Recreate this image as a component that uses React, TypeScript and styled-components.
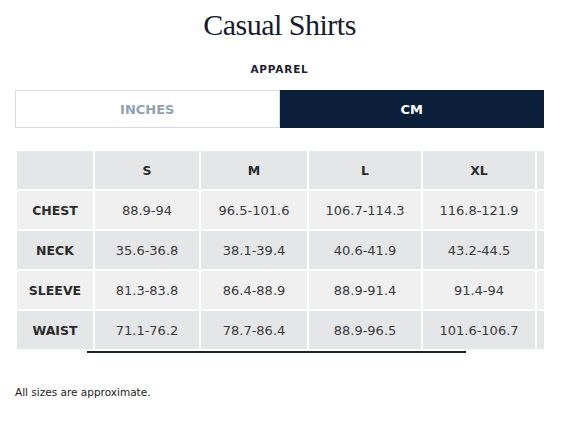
import { FC, Fragment } from 'react';
import styled, { createGlobalStyle } from 'styled-components';

const GlobalStyle = createGlobalStyle`
  html, body {
    margin: 0;
    padding: 0;
    background: #fff;
  }
  body {
    font-family: 'DejaVu Sans', 'Open Sans', sans-serif;
  }
`;

const Page = styled.div`
  width: 529px;
  margin-left: 15px;
  display: flex;
  flex-direction: column;
`;

const Title = styled.h1`
  margin: 7px 0 0;
  font-family: 'Liberation Serif', 'DejaVu Serif', serif;
  font-weight: 400;
  font-size: 30px;
  line-height: 36px;
  letter-spacing: -0.5px;
  text-align: center;
  color: #151b2e;
`;

const Subtitle = styled.div`
  margin-top: 19px;
  font-size: 10.5px;
  line-height: 14px;
  font-weight: 700;
  letter-spacing: 0.8px;
  text-align: center;
  color: #1c2233;
`;

const Toggle = styled.div`
  margin-top: 14px;
  display: grid;
  grid-template-columns: 1fr 1fr;
  height: 38px;
`;

const ToggleOption = styled.div<{ $active?: boolean }>`
  display: flex;
  align-items: center;
  justify-content: center;
  font-size: 13px;
  font-weight: 700;
  box-sizing: border-box;
  border: 1px solid ${(p) => (p.$active ? '#0b1f3a' : '#d7dce2')};
  background: ${(p) => (p.$active ? '#0b1f3a' : '#fff')};
  color: ${(p) => (p.$active ? '#fff' : '#8fa2b7')};
`;

const TableWrap = styled.div`
  margin: 23px 0 0 2px;
  width: 527px;
  overflow: hidden;
`;

const Grid = styled.div`
  display: grid;
  grid-template-columns: 76px 104px 106px 112px 112px 7px;
  grid-auto-rows: 38px;
  gap: 2px;
`;

const Cell = styled.div<{ $light?: boolean; $head?: boolean }>`
  display: flex;
  align-items: center;
  justify-content: center;
  background: ${(p) => (p.$light ? '#f0f0f1' : '#e5e6e8')};
  font-size: ${(p) => (p.$head ? '12.5px' : '13px')};
  font-weight: ${(p) => (p.$head ? 700 : 400)};
  color: ${(p) => (p.$head ? '#2b2b2b' : '#3a3a3a')};
`;

const ScrollThumb = styled.div`
  margin: 2px 0 0 72px;
  width: 379px;
  height: 2px;
  background: #1b2530;
`;

const Note = styled.p`
  margin: 32px 0 0;
  font-size: 10.5px;
  line-height: 14px;
  color: #222;
`;

const sizes = ['S', 'M', 'L', 'XL'];

const rows: Array<{ label: string; values: string[] }> = [
  { label: 'CHEST', values: ['88.9-94', '96.5-101.6', '106.7-114.3', '116.8-121.9'] },
  { label: 'NECK', values: ['35.6-36.8', '38.1-39.4', '40.6-41.9', '43.2-44.5'] },
  { label: 'SLEEVE', values: ['81.3-83.8', '86.4-88.9', '88.9-91.4', '91.4-94'] },
  { label: 'WAIST', values: ['71.1-76.2', '78.7-86.4', '88.9-96.5', '101.6-106.7'] },
];

const App: FC = () => (
  <>
    <GlobalStyle />
    <Page>
      <Title>Casual Shirts</Title>
      <Subtitle>APPAREL</Subtitle>
      <Toggle>
        <ToggleOption>INCHES</ToggleOption>
        <ToggleOption $active>CM</ToggleOption>
      </Toggle>
      <TableWrap>
        <Grid>
          <Cell $head />
          {sizes.map((s) => (
            <Cell key={s} $head>
              {s}
            </Cell>
          ))}
          <Cell $head />
          {rows.map((row, i) => (
            <Fragment key={row.label}>
              <Cell $head $light={i % 2 === 0}>
                {row.label}
              </Cell>
              {row.values.map((v, j) => (
                <Cell key={j} $light={i % 2 === 0}>
                  {v}
                </Cell>
              ))}
              <Cell $light={i % 2 === 0} />
            </Fragment>
          ))}
        </Grid>
      </TableWrap>
      <ScrollThumb />
      <Note>All sizes are approximate.</Note>
    </Page>
  </>
);

export default App;
